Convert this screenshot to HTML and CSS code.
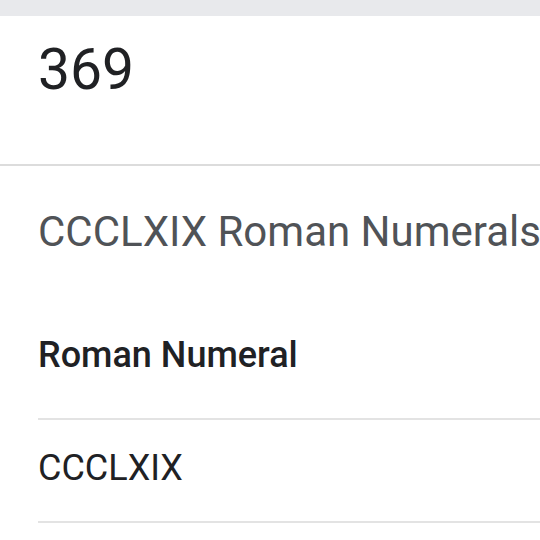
FILE: index.html
```html
<!DOCTYPE html>
<html>
<head>
<meta charset="utf-8">
<link rel="stylesheet" href="styles.css">
</head>
<body>
<div class="topbar"></div>
<section class="value">
  <div class="number">369</div>
</section>
<section class="content">
  <h1 class="title">CCCLXIX Roman Numerals</h1>
  <div class="table">
    <div class="th">Roman Numeral</div>
    <div class="td">CCCLXIX</div>
  </div>
</section>
</body>
</html>
```
FILE: styles.css
```css
html, body {
  margin: 0;
  padding: 0;
  background: #ffffff;
  font-family: Roboto, "Liberation Sans", sans-serif;
  overflow: hidden;
  width: 540px;
  height: 540px;
}
.topbar {
  height: 16px;
  background: #e8e9ec;
}
.value {
  height: 150px;
  box-sizing: border-box;
  padding: 20px 0 0 38px;
  border-bottom: 2px solid #dcdcdc;
}
.number {
  font-size: 57px;
  line-height: 68px;
  color: #202124;
  font-weight: 400;
}
.content {
  padding-left: 38px;
}
.title {
  margin: 41px 0 0 0;
  font-size: 42px;
  line-height: 50px;
  font-weight: 400;
  color: #505357;
  white-space: nowrap;
}
.table {
  margin-top: 77px;
}
.th {
  font-size: 36px;
  line-height: 42px;
  font-weight: 500;
  color: #202124;
  padding-bottom: 42px;
  border-bottom: 2px solid #e3e3e3;
}
.td {
  font-size: 36px;
  line-height: 42px;
  color: #202124;
  padding: 27px 0 32px;
  border-bottom: 2px solid #e3e3e3;
}
```
